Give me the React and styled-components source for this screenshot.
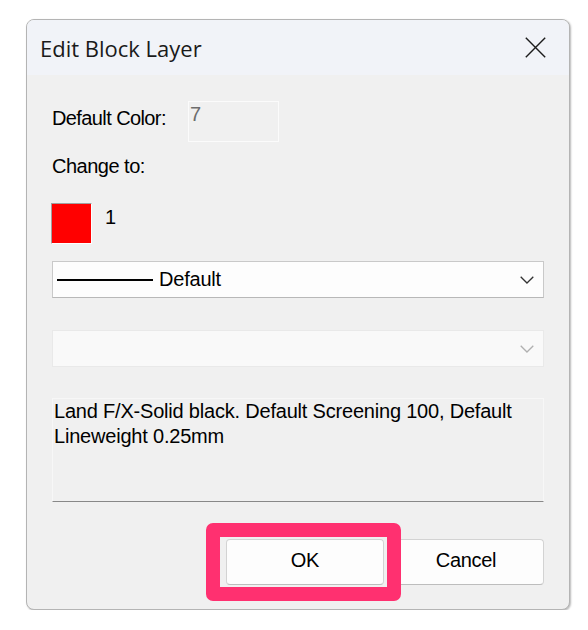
import React from 'react';
import styled, { createGlobalStyle } from 'styled-components';

const Global = createGlobalStyle`
  body {
    margin: 0;
    background: #ffffff;
    font-family: "Liberation Sans", Arial, sans-serif;
  }
`;

const Window = styled.div`
  box-sizing: border-box;
  width: 544px;
  margin: 19px 0 0 26px;
  border: 1px solid #b4b4b4;
  border-radius: 8px;
  overflow: hidden;
  background: #f0f0f0;
  box-shadow: 1px 1px 2px rgba(0, 0, 0, 0.28);
`;

const TitleBar = styled.div`
  height: 55px;
  display: flex;
  align-items: center;
  justify-content: space-between;
  padding: 0 23px 0 13px;
  background: #f1f3f8;
`;

const Title = styled.div`
  font-family: "Open Sans", "Noto Sans", sans-serif;
  font-size: 22px;
  line-height: 30px;
  color: #1a1a1a;
`;

const Body = styled.div`
  display: flex;
  flex-direction: column;
  padding: 26px 25px 24px;
`;

const Text = styled.span`
  font-size: 20px;
  letter-spacing: ${p => p.$spacing ?? -0.5}px;
  line-height: 25px;
  color: #000;
  margin-top: ${p => p.$top || 0}px;
`;

const Row = styled.div`
  display: flex;
  align-items: flex-start;
  margin-top: ${p => p.$top || 0}px;
`;

const Label = styled(Text)`
  width: 136px;
  padding-top: 5px;
`;

const ReadOnly = styled.div`
  box-sizing: border-box;
  width: 91px;
  height: 41px;
  border: 1px solid #fbfbfb;
  padding: 0 0 0 1px;
  font-size: 20px;
  line-height: 25px;
  color: #6d6d6d;
`;

const Swatch = styled.div`
  box-sizing: border-box;
  width: 41px;
  height: 41px;
  background: #ff0000;
  border-top: 1px solid #a0a0a0;
  border-left: 1px solid #a0a0a0;
  border-right: 1px solid #ffffff;
  border-bottom: 1px solid #ffffff;
  margin-left: -1px;
  margin-right: 13px;
`;

const Select = styled.div`
  box-sizing: border-box;
  height: 37px;
  display: flex;
  align-items: center;
  padding: 0 9px 0 4px;
  margin-top: ${p => p.$top}px;
  background: ${p => (p.$disabled ? '#f9f9f9' : '#fdfdfd')};
  border: 1px solid ${p => (p.$disabled ? '#e9e9e9' : '#c9c9c9')};
  border-bottom-color: ${p => (p.$disabled ? '#e9e9e9' : '#b8b8b8')};
`;

const LineSample = styled.div`
  width: 96px;
  height: 2px;
  background: #000;
  margin-right: 6px;
`;

const Grow = styled.div`
  flex: 1;
`;

const Chevron = ({ color }) => (
  <svg width="14" height="8" viewBox="0 0 14 8">
    <path d="M0.7 0.7 L7 7 L13.3 0.7" fill="none" stroke={color} strokeWidth="1.3" />
  </svg>
);

const Note = styled.div`
  box-sizing: border-box;
  height: 104px;
  margin-top: 31px;
  padding: 0 0 0 1px;
  border: 1px solid #f7f7f7;
  border-bottom: 1px solid #888888;
  background: #f0f0f0;
`;

const Buttons = styled.div`
  display: flex;
  justify-content: flex-end;
  gap: 4px;
  margin-top: 37px;
`;

const ButtonWrap = styled.div`
  position: relative;
`;

const Button = styled.button`
  box-sizing: border-box;
  width: ${p => p.$w}px;
  height: 46px;
  background: #fdfdfd;
  border: 1px solid #d3d3d3;
  border-bottom-color: #bdbdbd;
  border-radius: 4px;
  font-family: "Liberation Sans", Arial, sans-serif;
  font-size: 20px;
  letter-spacing: -0.3px;
  color: #000;
  padding: 0 0 4px;
`;

const Highlight = styled.div`
  position: absolute;
  left: -20px;
  top: -16px;
  width: 195px;
  height: 78px;
  box-sizing: border-box;
  border: 14px solid #ff3070;
  border-radius: 7px;
  pointer-events: none;
  z-index: 2;
`;

const CloseIcon = () => (
  <svg width="21" height="21" viewBox="0 0 21 21">
    <path d="M0.8 0.8 L20.2 20.2 M20.2 0.8 L0.8 20.2" stroke="#1c1c1c" strokeWidth="1.4" />
  </svg>
);

export default function App() {
  return (
    <>
      <Global />
      <Window>
        <TitleBar>
          <Title>Edit Block Layer</Title>
          <CloseIcon />
        </TitleBar>
        <Body>
          <Row>
            <Label $spacing={-0.6}>Default Color:</Label>
            <ReadOnly>7</ReadOnly>
          </Row>
          <Row $top={12}>
            <Text>Change to:</Text>
          </Row>
          <Row $top={24}>
            <Swatch />
            <Text $top={2}>1</Text>
          </Row>
          <Select $top={17}>
            <LineSample />
            <Text $spacing={-0.2}>Default</Text>
            <Grow />
            <Chevron color="#333" />
          </Select>
          <Select $top={32} $disabled>
            <Grow />
            <Chevron color="#b0b0b0" />
          </Select>
          <Note>
            <Text $spacing={-0.2}>
              Land F/X-Solid black. Default Screening 100, Default
              <br />
              Lineweight 0.25mm
            </Text>
          </Note>
          <Buttons>
            <ButtonWrap>
              <Button $w={158}>OK</Button>
              <Highlight />
            </ButtonWrap>
            <Button $w={156}>Cancel</Button>
          </Buttons>
        </Body>
      </Window>
    </>
  );
}
